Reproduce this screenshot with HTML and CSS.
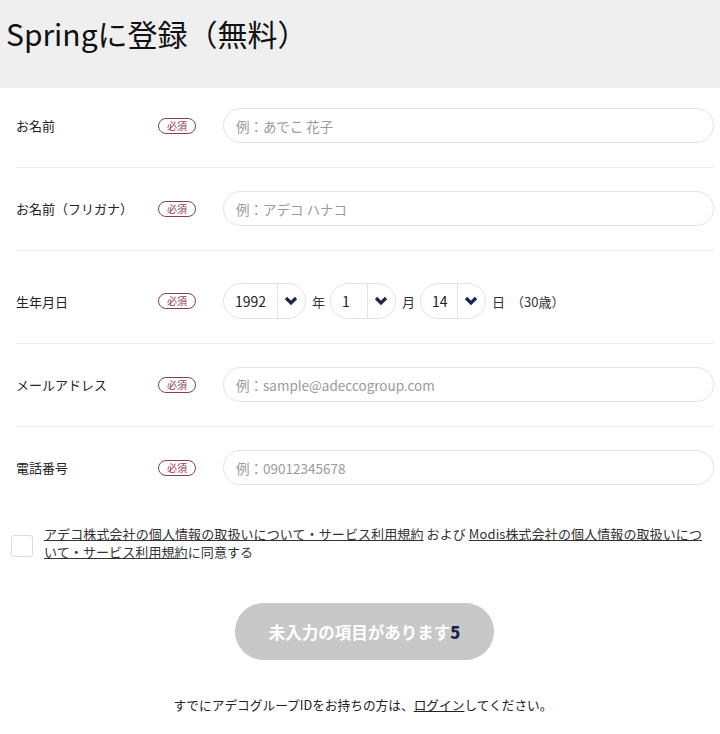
FILE: index.html
```html
<!DOCTYPE html>
<html lang="ja">
<head>
<meta charset="utf-8">
<title>Springに登録（無料）</title>
<link rel="stylesheet" href="styles.css">
</head>
<body>
<div class="head">
    <h1>Springに登録（無料）</h1>
</div>
<div class="form">
    <div class="row first">
        <div class="label">お名前</div>
        <span class="req">必須</span>
        <div class="field"><input class="txt" type="text" placeholder="例：あでこ 花子"></div>
    </div>
    <div class="row">
        <div class="label">お名前（フリガナ）</div>
        <span class="req">必須</span>
        <div class="field"><input class="txt" type="text" placeholder="例：アデコ ハナコ"></div>
    </div>
    <div class="row birth">
        <div class="label">生年月日</div>
        <span class="req">必須</span>
        <div class="field date">
            <div class="sel year"><span class="val">1992</span><span class="arr"><svg width="14" height="10" viewBox="0 0 14 10"><polyline points="2,2 7,7 12,2" fill="none" stroke="#1c2452" stroke-width="3.2"/></svg></span></div>
            <span class="unit">年</span>
            <div class="sel"><span class="val">1</span><span class="arr"><svg width="14" height="10" viewBox="0 0 14 10"><polyline points="2,2 7,7 12,2" fill="none" stroke="#1c2452" stroke-width="3.2"/></svg></span></div>
            <span class="unit">月</span>
            <div class="sel"><span class="val">14</span><span class="arr"><svg width="14" height="10" viewBox="0 0 14 10"><polyline points="2,2 7,7 12,2" fill="none" stroke="#1c2452" stroke-width="3.2"/></svg></span></div>
            <span class="unit">日</span>
            <span class="age">（30歳）</span>
        </div>
    </div>
    <div class="row">
        <div class="label">メールアドレス</div>
        <span class="req">必須</span>
        <div class="field"><input class="txt" type="text" placeholder="例：sample@adeccogroup.com"></div>
    </div>
    <div class="row last">
        <div class="label">電話番号</div>
        <span class="req">必須</span>
        <div class="field"><input class="txt" type="text" placeholder="例：09012345678"></div>
    </div>
</div>
<div class="agree">
    <span class="box"></span>
    <p><a href="#">アデコ株式会社の個人情報の取扱いについて・サービス利用規約</a> および <a href="#">Modis株式会社の個人情報の取扱いについて・サービス利用規約</a>に同意する</p>
</div>
<div class="submit">
    <button class="btn" type="button">未入力の項目があります<b>5</b></button>
</div>
<p class="foot">すでにアデコグループIDをお持ちの方は、<a href="#">ログイン</a>してください。</p>
</body>
</html>
```

FILE: styles.css
```css
*{ margin:0; padding:0; box-sizing:border-box;}
body{
  font-family:"Noto Sans CJK JP","Liberation Sans",sans-serif;
  color:#333;
  background:#fff;
}
.head{
  background:#efefef;
  height:88px;
  padding:13px 6px 0;
}
.head h1{
  font-size:30px;
  font-weight:normal;
  color:#111;
  line-height:40px;
}

.form{ margin:0 6px 0 16px;}
.row{
  display:flex;
  align-items:center;
  padding:23px 0 24px;
  border-bottom:1px solid #ececec;
}
.row.first{ padding-top:20px;}
.row.birth{ padding-top:32px;}
.row.last{ border-bottom:0;}
.label{ width:142px; font-size:13px; color:#222;}
.req{
  width:38px;
  height:16px;
  border:1.5px solid #8e3c50;
  border-radius:8px;
  color:#8e3c50;
  font-size:10px;
  line-height:13px;
  text-align:center;
}
.field{ flex:1; margin-left:27px;}
.txt{
  width:100%;
  height:35px;
  border:1px solid #e3e3e3;
  border-radius:18px;
  padding:0 12px;
  font-family:inherit;
  font-size:13.5px;
  color:#333;
  outline:none;
}
.txt::placeholder{ color:#9a9a9a;}

.date{ display:flex; align-items:center;}
.sel{
  display:flex;
  align-items:center;
  width:66px;
  height:36px;
  border:1px solid #e3e3e3;
  border-radius:18px;
  font-size:14px;
  color:#222;
}
.sel.year{ width:83px;}
.sel .val{ flex:1; padding-left:11px;}
.sel .arr{
  width:28px;
  height:100%;
  border-left:1px solid #e3e3e3;
  display:flex;
  align-items:center;
  justify-content:center;
  padding-right:2px;
}
.sel .arr svg{ display:block;}
.unit{ font-size:13px; color:#333; margin:0 5px 0 6px;}
.age{ font-size:13px; color:#333; margin-left:1px;}

.agree{
  display:flex;
  align-items:flex-start;
  margin:16px 6px 0 11px;
}
.box{
  flex:none;
  width:22px;
  height:22px;
  border:1px solid #dcdcdc;
  border-radius:3px;
  margin-top:10px;
}
.agree p{
  margin-left:11px;
  font-size:13px;
  line-height:18px;
  letter-spacing:0.1px;
  color:#333;
}
.agree a{ color:#333;}

.submit{ text-align:center; margin-top:42px; padding-left:9px;}
.btn{
  width:259px;
  height:57px;
  border:0;
  border-radius:29px;
  background:#c8c8c8;
  color:#fff;
  font-family:inherit;
  font-size:16.5px;
  font-weight:bold;
}
.btn b{ color:#1c2452;}

.foot{
  text-align:center;
  font-size:12.7px;
  color:#222;
  margin-top:35px;
  padding-left:6px;
}
.foot a{ color:#222;}
```
